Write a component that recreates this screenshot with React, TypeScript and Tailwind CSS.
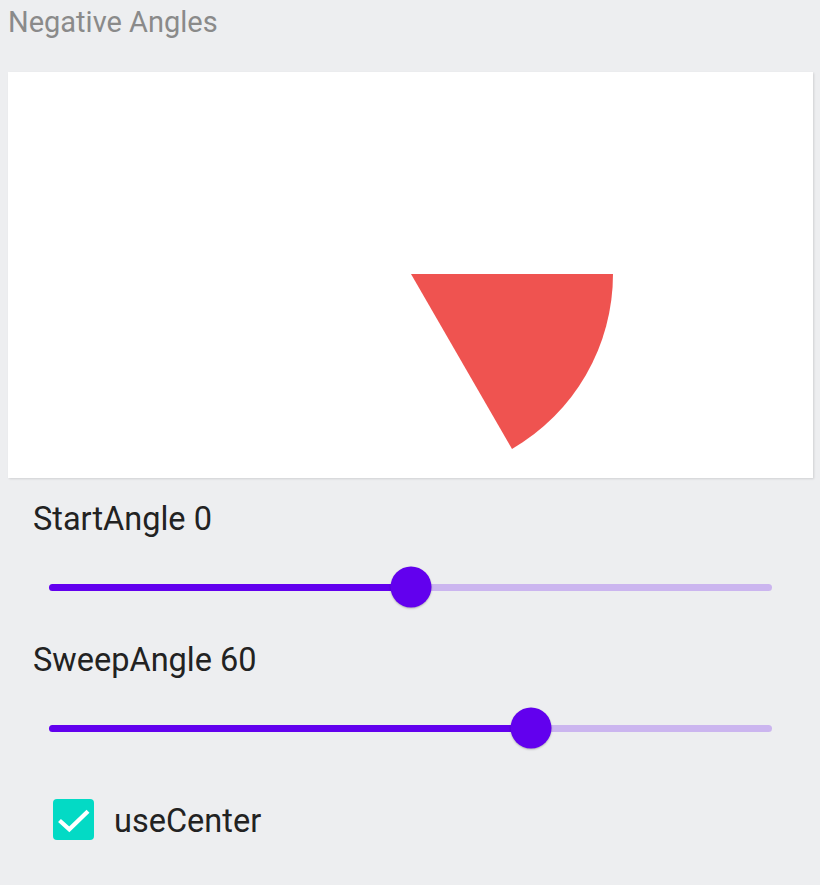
import React, { useState } from "react";

function Slider({ value, min, max }: { value: number; min: number; max: number }) {
  const pct = ((value - min) / (max - min)) * 100;
  return (
    <div className="h-[48px] pl-[49px] pr-[48px] flex items-center">
      <div className="relative w-full h-[7px] rounded-full bg-[#cbb5ef]">
        <div className="absolute left-0 top-0 h-full rounded-full bg-[#6200ee]" style={{ width: `${pct}%` }} />
        <div
          className="absolute top-1/2 w-[41px] h-[41px] -translate-x-1/2 -translate-y-1/2 rounded-full bg-[#6200ee] shadow-[0_1px_2px_rgba(0,0,0,0.25)]"
          style={{ left: `${pct}%` }}
        />
      </div>
    </div>
  );
}

function Pie({ start, sweep }: { start: number; sweep: number }) {
  const cx = 403;
  const cy = 202;
  const r = 202;
  const a0 = (start * Math.PI) / 180;
  const a1 = ((start + sweep) * Math.PI) / 180;
  const x0 = cx + r * Math.cos(a0);
  const y0 = cy + r * Math.sin(a0);
  const x1 = cx + r * Math.cos(a1);
  const y1 = cy + r * Math.sin(a1);
  const large = Math.abs(sweep) > 180 ? 1 : 0;
  const dir = sweep >= 0 ? 1 : 0;
  return (
    <svg width="805" height="406" viewBox="0 0 805 406" className="block">
      <path d={`M${cx},${cy} L${x0},${y0} A${r},${r} 0 ${large} ${dir} ${x1},${y1} Z`} fill="#ef5350" />
    </svg>
  );
}

export default function App() {
  const [start] = useState(0);
  const [sweep] = useState(60);
  return (
    <div className="w-[820px] h-[885px] bg-[#edeef0] font-['Roboto',sans-serif] overflow-hidden">
      <div className="pt-[4px] pl-[8px] text-[29px] leading-[36px] text-[#8a8a8a]">Negative Angles</div>
      <div className="mt-[32px] ml-[8px] w-[805px] h-[406px] bg-white shadow-[1px_1px_2px_rgba(0,0,0,0.12)]">
        <Pie start={start} sweep={sweep} />
      </div>
      <div className="mt-[21px] pl-[33px] text-[32.5px] leading-[40px] text-[#222]">StartAngle {start}</div>
      <div className="mt-[24px]">
        <Slider value={start} min={-180} max={180} />
      </div>
      <div className="mt-[29px] pl-[33px] text-[32.5px] leading-[40px] text-[#222]">SweepAngle {sweep}</div>
      <div className="mt-[24px]">
        <Slider value={sweep} min={-180} max={180} />
      </div>
      <div className="mt-[43px] h-[48px] pl-[53px] flex items-center gap-[20px]">
        <div className="w-[41px] h-[41px] rounded-[4px] bg-[#03dac5] flex items-center justify-center">
          <svg width="41" height="41" viewBox="0 0 41 41">
            <path d="M6.5 21.5 L16.3 30.3 L35 12.2" fill="none" stroke="white" strokeWidth="4.2" />
          </svg>
        </div>
        <span className="text-[32.5px] leading-[40px] text-[#222] pt-[4px]">useCenter</span>
      </div>
    </div>
  );
}
